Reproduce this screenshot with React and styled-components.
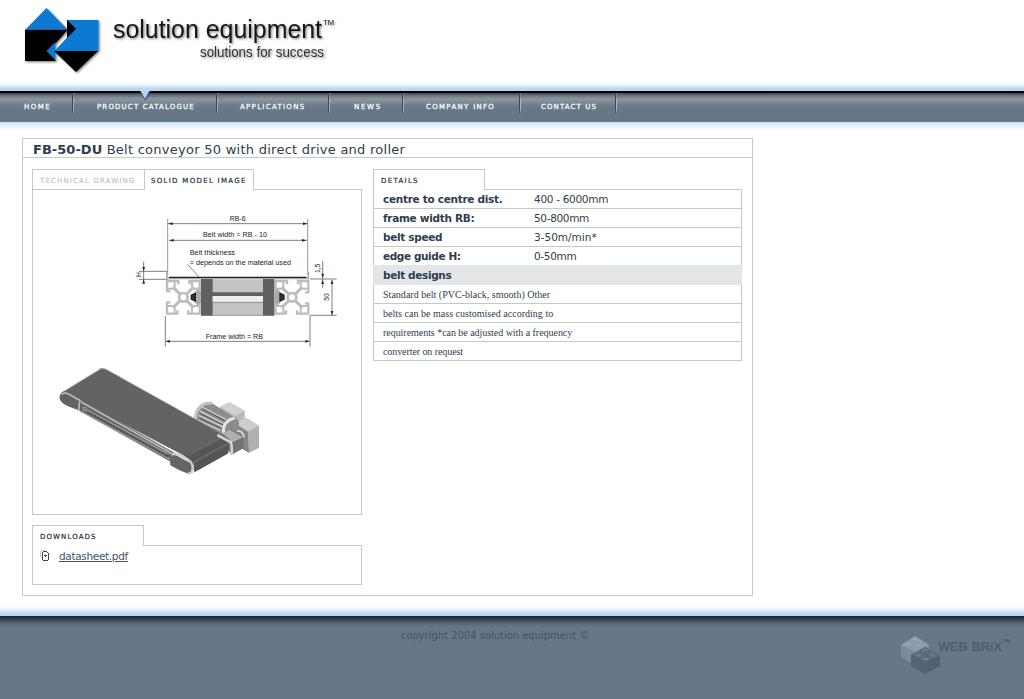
import React from "react";
import styled, { createGlobalStyle, css } from "styled-components";

const line = "#c8c8c8";
const ink = "#2f3d4d";

const GlobalStyle = createGlobalStyle`
  * { box-sizing: border-box; }
  html, body { margin: 0; padding: 0; background: #fff; }
  body { font-family: "DejaVu Sans", sans-serif; font-size: 11px; color: ${ink}; overflow: hidden; }
`;

const Page = styled.div`
  display: flex;
  flex-direction: column;
  width: 1024px;
  height: 699px;
`;

const Header = styled.header`
  flex: 0 0 91px;
  background: linear-gradient(#fff 82px, #e3effa 86px, #bddaf5 88px, #b5d3f0 91px);
`;

const pixelType = css`
  font-family: "DejaVu Sans", sans-serif;
  font-size: 7px;
  line-height: 8px;
  white-space: nowrap;
`;

const Nav = styled.nav`
  position: relative;
  flex: 0 0 31px;
  display: flex;
  align-items: flex-start;
  background: linear-gradient(#000 0 2px, #3a4249 2px, #626b73 4px, #858f99 7px, #8a949e 9px, #6e7d8c 14px, #667788 18px);
`;

const NavItem = styled.a`
  ${pixelType}
  width: ${(p) => p.$width}px;
  height: 23px;
  padding-top: 12px;
  padding-left: ${(p) => p.$gap}px;
  color: #fff;
  -webkit-text-stroke: 0.25px #fff;
  letter-spacing: ${(p) => p.$spacing}px;
  background:
    linear-gradient(#77828e 3px, #b5bdc4 8px, #aab3bb 15px, #667788 22px) right / 1px 20px no-repeat,
    linear-gradient(#39434d 3px, #34465a 14px, #667788 22px) right 1px bottom / 1px 20px no-repeat;
`;

const Marker = styled.svg`
  position: absolute;
  left: 138px;
  top: 0;
`;

const Main = styled.main`
  flex: 0 0 494px;
  padding: 16px 0 0 22px;
  background: linear-gradient(#c4dff6 0, #e3f0fb 3px, #fff 9px, #fff 484px, #e3effa 488px, #bddaf5 491px, #b5d3f0 494px);
`;

const Product = styled.section`
  width: 731px;
  height: 458px;
  border: 1px solid ${line};
  background: #fff;
`;

const Title = styled.h1`
  height: 19px;
  margin: 0;
  padding-left: 10px;
  border-bottom: 1px solid ${line};
  font-size: 13px;
  line-height: 21px;
  font-weight: normal;
  letter-spacing: 0.26px;
  white-space: nowrap;

  b { letter-spacing: 0.03px; }
`;

const Columns = styled.div`
  display: grid;
  grid-template-columns: 330px 369px;
  column-gap: 11px;
  padding: 11px 0 0 9px;
  align-items: start;
`;

const Tabs = styled.div`
  display: flex;
  height: 21px;
  margin-bottom: -1px;
`;

const Tab = styled.div`
  ${pixelType}
  position: relative;
  width: ${(p) => p.$width}px;
  height: ${(p) => (p.$muted ? 20 : 21)}px;
  padding: 7px 0 0 ${(p) => p.$pad ?? 8}px;
  border: 1px solid ${line};
  border-bottom: 0;
  margin-right: ${(p) => (p.$muted ? -1 : 0)}px;
  background: #fff;
  color: ${(p) => (p.$muted ? "#bbbec1" : "#22303f")};
  -webkit-text-stroke: ${(p) => (p.$muted ? 0.1 : 0.2)}px currentColor;
  letter-spacing: ${(p) => p.$spacing}px;
`;

const Panel = styled.div`
  height: ${(p) => p.$height}px;
  border: 1px solid ${line};
`;

const Downloads = styled.div`
  margin-top: 10px;
`;

const Download = styled.a`
  display: flex;
  align-items: center;
  height: 20px;
  padding-left: 7px;
  gap: 9px;
  color: #435363;
  font-size: 10.5px;
  letter-spacing: -0.33px;

  span { text-decoration: underline; }
`;

const Specs = styled.dl`
  margin: 0;
  border: 1px solid ${line};
  border-bottom: 0;
  font-size: 10.5px;
`;

const Spec = styled.div`
  display: grid;
  grid-template-columns: 151px 1fr;
  height: 19px;
  padding-left: 9px;
  border-bottom: 1px solid ${line};
  line-height: 18px;
  white-space: nowrap;

  dt { font-weight: bold; letter-spacing: ${(p) => p.$label ?? 0}px; }
  dd { margin: 0; letter-spacing: ${(p) => p.$value ?? 0}px; }
`;

const SpecHeading = styled.div`
  height: 20px;
  margin: -1px -1px 0;
  padding-left: 10px;
  background: #e2e6e9;
  line-height: 20px;
  font-weight: bold;
  letter-spacing: -0.36px;
`;

const Note = styled.div`
  height: 19px;
  padding-left: 9px;
  border-bottom: 1px solid ${line};
  font-family: "Liberation Serif", serif;
  font-size: 10px;
  line-height: 19px;
  letter-spacing: ${(p) => p.$spacing ?? 0}px;
`;

const Footer = styled.footer`
  flex: 1;
  display: grid;
  grid-template-columns: 401px 1fr auto;
  background: linear-gradient(#17222e 0, #303e4b 3px, #566573 7px, #667788 11px);
`;

const Copyright = styled.p`
  grid-column: 2;
  margin: 13px 0 0;
  font-size: 10px;
  line-height: 13px;
  color: #435365;
  letter-spacing: -0.03px;
`;

function Logo() {
  return (
    <svg width="345" height="80" viewBox="0 0 345 80">
      <defs>
        <filter id="shadow" x="-10%" y="-10%" width="125%" height="130%">
          <feDropShadow dx="1.2" dy="1.2" stdDeviation="0.9" floodOpacity="0.5" />
        </filter>
      </defs>
      <g filter="url(#shadow)">
        <path d="M25 29.5h43L55 44l-7 7 8 10H25z" />
        <path d="M25.500 29.500 46.500 8 67.500 29.500z" fill="#0879d1" />
        <path d="M67 20h31.500v31H54.500L75 29z" fill="#0879d1" />
        <path d="M67 19.500 76 29 67 38z" />
        <path d="M55.500 42v18L46.500 51z" fill="#0879d1" />
        <path d="M54 51h44L76 72z" />
        <text fontFamily="Liberation Sans" fill="#151515">
          <tspan x="113" y="38" fontSize="25.500" textLength="209" lengthAdjust="spacingAndGlyphs">solution equipment</tspan>
          <tspan x="323" y="25" fontSize="8" textLength="11" lengthAdjust="spacingAndGlyphs">TM</tspan>
        </text>
        <text x="200" y="57" fontFamily="Liberation Sans" fontSize="14" fill="#333" textLength="124" lengthAdjust="spacingAndGlyphs">solutions for success</text>
      </g>
    </svg>
  );
}

function Profile({ x }) {
  return (
    <g transform={`translate(${x} 223)`} fill="none" stroke="#bdbdbd">
      <path d="M24 24l60 60M84 24L24 84" strokeWidth="9" />
      {[0, 90, 180, 270].map((turn) => (
        <g key={turn} transform={`rotate(${turn} 54 54)`}>
          <path d="M5 39V5h34v10M5 36h10" strokeWidth="7" />
          <path d="M8 28h14l6-6V8" strokeWidth="6" />
        </g>
      ))}
      <circle cx="54" cy="54" r="13" strokeWidth="8" fill="#fff" />
    </g>
  );
}

function Arrow({ x, y, turn = 0 }) {
  return <path d="M0 0l13-4v8z" fill="#222" transform={`translate(${x} ${y}) rotate(${turn})`} />;
}

function Section() {
  return (
    <g transform="translate(125 205) scale(.33333)" fontFamily="Liberation Sans" fontSize="20" fill="#222">
      <path d="M128 42v165M548 42v165" stroke="#999" strokeWidth="3" />
      <path d="M128 56h420M132 106h414M42 199h86M42 223h86M56 170v65M121 333v92M555 333v92M122 409h432M555 222h80M555 331h80M621 225v106M593 168v55M593 223v25" fill="none" stroke="#666" strokeWidth="2.500" />
      <path d="M126 200v20h424v-20" fill="none" stroke="#aaa" strokeWidth="5" />
      <Profile x={121} />
      <Profile x={447} />
      <rect x="228" y="223" width="219" height="108" fill="#c3c3c3" />
      <path d="M228 222h35v110h-35zM414 222h34v110h-34zM263 262h151v11H263z" fill="#606060" />
      <path d="M263 273h151v18H263z" fill="#ededed" />
      <path d="M263 292h151M228 331h219" stroke="#777" strokeWidth="2" />
      <path d="M228 262l-10-10-10 12v26l10 12 10-10zM448 262l10-10 10 12v26l-10 12-10-10z" fill="#aaa" />
      <path d="M199 270l12-5v23l-12-5zM477 270l-12-5v23l12-5z" fill="#333" stroke="#222" strokeWidth="4" />
      <path d="M132 217h412" stroke="#222" strokeWidth="4" />
      <path d="M187 178l37 40" stroke="#444" strokeWidth="2" />
      <Arrow x={130} y={56} /><Arrow x={547} y={56} turn={180} />
      <Arrow x={133} y={106} /><Arrow x={544} y={106} turn={180} />
      <Arrow x={122} y={409} /><Arrow x={554} y={409} turn={180} />
      <Arrow x={56} y={199} turn={-90} /><Arrow x={56} y={223} turn={90} />
      <Arrow x={621} y={224} turn={90} /><Arrow x={621} y={331} turn={-90} />
      <Arrow x={593} y={219} turn={-90} /><Arrow x={593} y={224} turn={90} />
      <text x="314" y="48" textLength="48" lengthAdjust="spacingAndGlyphs">RB-6</text>
      <text x="234" y="97" textLength="192" lengthAdjust="spacingAndGlyphs">Belt width = RB - 10</text>
      <text x="194" y="151" textLength="136" lengthAdjust="spacingAndGlyphs">Belt thickness</text>
      <text x="194" y="179" textLength="304" lengthAdjust="spacingAndGlyphs">= depends on the material used</text>
      <text x="242" y="402" textLength="172" lengthAdjust="spacingAndGlyphs">Frame width = RB</text>
      <text transform="translate(48 216) rotate(-90)">H</text>
      <text transform="translate(586 204) rotate(-90)">1,5</text>
      <text transform="translate(613 287) rotate(-90)">50</text>
    </g>
  );
}

function Conveyor() {
  return (
    <g transform="translate(50 360) scale(.33333)">
      <path d="M148 27l12-2 50 27v9l-16-2z" fill="#c9c9c9" stroke="#888" strokeWidth="2" />
      <path d="M510 141l28-14 46 25v26l-30 16-50-27z" fill="#b9b9b9" />
      <path d="M510 141l28-14 46 25-27 16z" fill="#d1d1d1" />
      <path d="M553 190l34-17 40 24v66l-30 15-18-10-26-20z" fill="#bcbcbc" />
      <path d="M553 190l34-17 40 24-33 18z" fill="#cdcdcd" />
      <path d="M553 190l41 25 3 63-18-10-24-18z" fill="#858585" />
      <path d="M594 215l33-18v66l-30 15z" fill="#b0b0b0" />
      <path d="M436 158c7-24 29-36 48-30l76 48c14 9 7 38-16 45l-30 3-80-29z" fill="#8d8d8d" />
      <path d="M438 190c-8-38 18-65 48-60" fill="none" stroke="#c4c4c4" strokeWidth="9" />
      <path d="M456 141l72 38M451 154l70 37M446 166l72 34M443 180l70 31" stroke="#d0d0d0" strokeWidth="4" />
      <path d="M458 148l72 36M451 161l69 34M448 174l66 33" stroke="#515151" strokeWidth="3" />
      <path d="M521 220c-4-24 10-42 33-45" stroke="#e6e6e6" strokeWidth="9" fill="none" />
      <path d="M505 226l38-18 37 22v35l-36 20-24-38z" fill="#727272" />
      <path d="M505 226l34-17 40 23-34 16z" fill="#b0b0b0" />
      <path d="M561 213q17-3 21 19" stroke="#ddd" strokeWidth="5" fill="none" />
      <path d="M90 118L380 282l-10 28L90 154z" fill="#6e6e6e" />
      <path d="M48 91L151 28q12-3 21 3l350 194 18 14-8 42-97 54-26-43-5-4L96 127 40 98z" fill="#636363" />
      <path d="M34 98l9-6 52 32 270 154 50 28q20 11 8 29-5 8-62-26v-11L94 154 58 140C30 129 22 113 34 98z" fill="#626262" />
      <path d="M433 322q-1-31-33-35l108-52q34-4 29 23l-2 22-102 57z" fill="#555" />
      <path d="M414 286l98-52M430 307l104-56" stroke="#696969" strokeWidth="6" />
      <path d="M46 91L151 27q12-3 21 3l348 194" fill="none" stroke="#999" strokeWidth="2" />
      <path d="M502 225l39 21q6 5 4 38" fill="none" stroke="#d4d4d4" strokeWidth="8" />
      <path d="M34 103q7-7 22-1l35 20q-4 4-5 32M94 126l270 154" stroke="#bbb" strokeWidth="5" fill="none" />
      <path d="M97 142l262 142M91 153l270 145" stroke="#999" strokeWidth="4" fill="none" />
      <path d="M103 149l250 142" stroke="#424242" strokeWidth="3" strokeDasharray="7 4" fill="none" />
      <path d="M361 281l53 25q18 11 10 34-12 6-63-24z" fill="#656565" />
      <path d="M364 283q19-4 48 15 24 15 13 39l-12 5" stroke="#cfcfcf" strokeWidth="7" fill="none" />
      <circle cx="105" cy="148" r="6" fill="#777" stroke="#aaa" strokeWidth="2" />
      <circle cx="352" cy="286" r="5" fill="#555" />
    </g>
  );
}

const DrawingCanvas = styled.svg`
  display: block;
`;

function Drawing() {
  return (
    <DrawingCanvas width="328" height="324" viewBox="33 190 328 324">
      <Section />
      <Conveyor />
    </DrawingCanvas>
  );
}

function FileIcon() {
  return (
    <svg width="10" height="12" viewBox="0 0 10 12">
      <path d="M1 0h4v1H1zM0 1h1v6H0zM1 7h1v1H1z" fill="#c5c9cc" />
      <path d="M3 1h4v1H3zM7 2h1v1H7zM8 3h1v7H8zM2 2h1v8H2zM3 10h5v1H3zM4 5h3v1H6v1H5V6H4z" fill="#34475b" />
    </svg>
  );
}

function WebBrix() {
  return (
    <svg width="126" height="75" viewBox="898 616 126 75">
      <path d="M901 645l14-9 14 9v12l-14 8-14-8z" fill="#8190a0" />
      <path d="M901 645l14-9 14 9-14 7z" fill="#8d9ba8" />
      <path d="M901 645l14 7v13l-14-8z" fill="#7b8b9a" />
      <path d="M911 655l14-8 15 9v10l-15 8-14-8z" fill="#4f6172" />
      <path d="M911 655l14-8 15 9-14 6z" fill="#596b7d" />
      <path d="M911 656l15 6v12l-15-8z" fill="#526577" />
      <g fill="#98a4b0"><ellipse cx="915" cy="639" rx="3" ry="1.500" /><ellipse cx="908" cy="644" rx="3" ry="1.500" /><ellipse cx="919" cy="645" rx="3" ry="1.500" /></g>
      <g fill="#6a7b8b"><ellipse cx="925" cy="650" rx="3" ry="1.500" /><ellipse cx="918" cy="655" rx="3" ry="1.500" /><ellipse cx="932" cy="655" rx="3" ry="1.500" /><ellipse cx="925" cy="659" rx="3" ry="1.500" /></g>
      <text fill="#4c5e71" fontFamily="Liberation Sans" fontWeight="bold">
        <tspan x="938" y="651" fontSize="13.500" textLength="64" lengthAdjust="spacingAndGlyphs">WEB BRiX</tspan>
        <tspan x="1002" y="643" fontSize="6" textLength="9" lengthAdjust="spacingAndGlyphs">TM</tspan>
      </text>
    </svg>
  );
}

const navItems = [
  ["HOME", 74, 24, 1.5],
  ["PRODUCT CATALOGUE", 144, 23, 1.15],
  ["APPLICATIONS", 112, 22, 1.3],
  ["NEWS", 74, 24, 1.7],
  ["COMPANY INFO", 117, 22, 1.3],
  ["CONTACT US", 96, 20, 1.1],
];

const specs = [
  ["centre to centre dist.", "400 - 6000mm", -0.29, -0.3],
  ["frame width RB:", "50-800mm", -0.29, -0.33],
  ["belt speed", "3-50m/min*", -0.32, 0],
  ["edge guide H:", "0-50mm", -0.4, -0.33],
];

const notes = [
  ["Standard belt (PVC-black, smooth) Other", 0.02],
  ["belts can be mass customised according to", 0.02],
  ["requirements *can be adjusted with a frequency", -0.04],
  ["converter on request", -0.08],
];

export default function App() {
  return (
    <Page>
      <GlobalStyle />
      <Header><Logo /></Header>
      <Nav>
        {navItems.map(([label, width, gap, spacing]) => (
          <NavItem key={label} $width={width} $gap={gap} $spacing={spacing}>{label}</NavItem>
        ))}
        <Marker width="14" height="11" viewBox="0 0 14 11">
          <path d="M1 0h13L7.500 10z" fill="#34414e" opacity=".5" />
          <path d="M2.500 0h9L7 7.500z" fill="#b5d3f0" />
        </Marker>
      </Nav>
      <Main>
        <Product>
          <Title><b>FB-50-DU</b> Belt conveyor 50 with direct drive and roller</Title>
          <Columns>
            <div>
              <Tabs>
                <Tab $muted $width={113} $pad={7} $spacing={1.15}>TECHNICAL DRAWING</Tab>
                <Tab $width={110} $pad={6} $spacing={1.3}>SOLID MODEL IMAGE</Tab>
              </Tabs>
              <Panel $height={326}><Drawing /></Panel>
              <Downloads>
                <Tabs><Tab $width={112} $pad={7} $spacing={1.1}>DOWNLOADS</Tab></Tabs>
                <Panel $height={40}>
                  <Download><FileIcon /><span>datasheet.pdf</span></Download>
                </Panel>
              </Downloads>
            </div>
            <div>
              <Tabs><Tab $width={112} $pad={7} $spacing={1.3}>DETAILS</Tab></Tabs>
              <Specs>
                {specs.map(([name, value, label, spacing]) => (
                  <Spec key={name} $label={label} $value={spacing}><dt>{name}</dt><dd>{value}</dd></Spec>
                ))}
                <SpecHeading>belt designs</SpecHeading>
                {notes.map(([note, spacing]) => <Note key={note} $spacing={spacing}>{note}</Note>)}
              </Specs>
            </div>
          </Columns>
        </Product>
      </Main>
      <Footer>
        <Copyright>copyright 2004 solution equipment ©</Copyright>
        <WebBrix />
      </Footer>
    </Page>
  );
}
